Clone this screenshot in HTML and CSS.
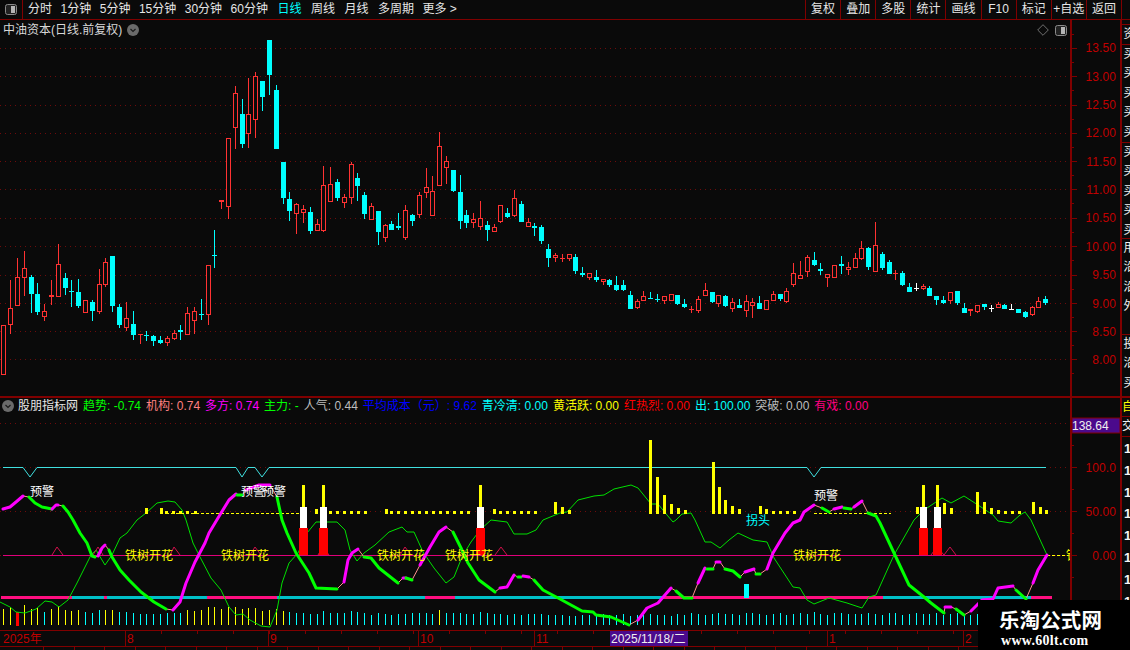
FILE: index.html
```html
<!DOCTYPE html>
<html lang="zh-CN">
<head>
<meta charset="utf-8">
<title>中油资本 日线</title>
<link rel="stylesheet" href="styles.css">
</head>
<body>
<div class="app">
  <header class="toolbar">
    <div class="tb-left">
      <svg class="icon-panel" viewBox="0 0 12 11"><rect x=".5" y=".5" width="11" height="10" rx="2" class="ip-frame"/><rect x="6" y="2" width="4" height="7" class="ip-fill"/></svg>
    </div>
    <nav class="tabs">
      <span class="num">分时</span><span class="num">1分钟</span><span class="num">5分钟</span><span class="num">15分钟</span><span class="num">30分钟</span><span>60分钟</span>
      <span class="active">日线</span><span>周线</span><span>月线</span><span class="num">多周期</span><span>更多 &gt;</span>
    </nav>
    <div class="actions">
      <span>复权</span><span>叠加</span><span>多股</span><span>统计</span><span>画线</span><span>F10</span><span>标记</span><span>+自选</span><span>返回</span>
    </div>
  </header>

  <section class="row row-main">
    <div class="plot">
      <div class="title-row">
        <span class="title">中油资本(日线.前复权)</span>
        <svg class="chev" viewBox="0 0 12 12"><circle cx="6" cy="6" r="6" class="chev-bg"/><path d="M3.5 5 6 7.5 8.5 5" class="chev-line"/></svg>
        <span class="grow"></span>
        <svg class="diamond" viewBox="0 0 12 12"><path d="M6 .7 11.3 6 6 11.3 .7 6Z"/></svg>
        <svg class="icon-panel" viewBox="0 0 12 11"><rect x=".5" y=".5" width="11" height="10" rx="2" class="ip-frame"/><rect x="6" y="2" width="4" height="7" class="ip-fill"/></svg>
      </div>
      <svg id="main" class="svg main-svg" viewBox="0 40 1070 356" width="1070" height="356"></svg>
    </div>
    <svg id="main-axis" class="axis" viewBox="1072 20 48 376" width="48" height="376">
      <text x="1116" y="52">13.50</text><text x="1116" y="80.5">13.00</text><text x="1116" y="109">12.50</text>
      <text x="1116" y="137">12.00</text><text x="1116" y="165.5">11.50</text><text x="1116" y="193.5">11.00</text>
      <text x="1116" y="222">10.50</text><text x="1116" y="250.5">10.00</text><text x="1116" y="279">9.50</text>
      <text x="1116" y="307.5">9.00</text><text x="1116" y="335.5">8.50</text><text x="1116" y="364">8.00</text>
    </svg>
    <aside class="side">
      <div class="side-gap"></div>
      <div class="tab t1"><span>资</span></div>
      <div class="tab t2"><span>买买买买买</span></div>
      <div class="tab t3"><span>买买买买买</span></div>
      <div class="tab t4"><span>用沿沿外</span></div>
      <div class="tab t5"><span>投沿买</span></div>
    </aside>
  </section>

  <section class="row row-sub">
    <div class="plot">
      <div class="legend">
        <svg class="chev" viewBox="0 0 12 12"><circle cx="6" cy="6" r="6" class="chev-bg"/><path d="M3.5 5 6 7.5 8.5 5" class="chev-line"/></svg>
        <span class="lg-name">股朋指标网</span>
        <span class="c-green">趋势: -0.74</span>
        <span class="c-salmon">机构: 0.74</span>
        <span class="c-magenta">多方: 0.74</span>
        <span class="c-green">主力: -</span>
        <span class="c-grey">人气: 0.44</span>
        <span class="c-blue">平均成本（元）: 9.62</span>
        <span class="c-cyan">青冷清: 0.00</span>
        <span class="c-yellow">黄活跃: 0.00</span>
        <span class="c-red">红热烈: 0.00</span>
        <span class="c-cyan">出: 100.00</span>
        <span class="c-grey">突破: 0.00</span>
        <span class="c-pink">有戏: 0.00</span>
      </div>
      <svg id="sub" class="svg" viewBox="0 414 1070 216" width="1070" height="216">
        <g id="sub-geo"></g>
        <text class="lb-y" x="125" y="559.5">铁树开花</text>
        <text class="lb-y" x="221" y="559.5">铁树开花</text>
        <text class="lb-y" x="377" y="559.5">铁树开花</text>
        <text class="lb-y" x="445" y="559.5">铁树开花</text>
        <text class="lb-y" x="793" y="559.5">铁树开花</text>
        <text class="lb-y" x="1066" y="559.5">铁</text>
        <text class="lb-w" x="30" y="496">预警</text>
        <text class="lb-w" x="241" y="496">预警</text>
        <text class="lb-w" x="262" y="496">预警</text>
        <text class="lb-w" x="814" y="499.5">预警</text>
        <text class="lb-c" x="746" y="524.5">拐头</text>
      </svg>
    </div>
    <svg id="sub-axis" class="axis" viewBox="1072 398 48 232" width="48" height="232">
      <rect class="hl-box" x="1072" y="418" width="48" height="15"/>
      <text class="hl-text" x="1072" y="430">138.64</text>
      <text x="1116" y="471.5">100.0</text><text x="1116" y="516">50.00</text><text x="1116" y="560">0.00</text>
    </svg>
    <aside class="side side-low">
      <div class="tab-y"><span>自</span></div>
      <div class="tab-j"><span>交</span></div>
      <ul class="digits"><li>1</li><li>1</li><li>1</li><li>1</li><li>1</li><li>1</li><li>1</li><li>1</li></ul>
    </aside>
  </section>

  <svg id="dates" class="dates" viewBox="0 630 1130 20" width="1130" height="20">
    <g id="date-geo"></g>
    <rect class="hl-date" x="610" y="631" width="78" height="15"/>
    <text class="dt" x="3" y="643">2025年</text>
    <text class="dt" x="127" y="643">8</text>
    <text class="dt" x="270" y="643">9</text>
    <text class="dt" x="420" y="643">10</text>
    <text class="dt" x="536" y="643">11</text>
    <text class="dt-hl" x="611" y="643">2025/11/18/二</text>
    <text class="dt" x="829" y="643">1</text>
    <text class="dt" x="965" y="643">2</text>
  </svg>

  <aside class="watermark">
    <div class="wm-cn">乐淘公式网</div>
    <div class="wm-en">www.60lt.com</div>
  </aside>
</div>
<script src="chart.js"></script>
</body>
</html>
```

FILE: styles.css
```css
* { box-sizing: border-box; }
html, body { margin: 0; padding: 0; background: #0a0a0a; }
body { font-family: "Liberation Sans", "Noto Sans CJK SC", sans-serif; font-size: 12px; color: #e6e6e6; }
.app { position: relative; width: 1130px; height: 650px; overflow: hidden; background: #0a0a0a; display: flex; flex-direction: column; }

.toolbar { display: flex; height: 20px; border-bottom: 1px solid #800000; flex: none; }
.tb-left { width: 23px; border-right: 1px solid #800000; display: flex; align-items: center; justify-content: center; }
.icon-panel { width: 12px; height: 11px; display: block; }
.ip-frame { fill: #222; stroke: #8a8a8a; stroke-width: 1; }
.ip-fill { fill: #b5b5b5; }
.tabs { display: flex; gap: 9.5px; padding-left: 5px; flex: 1; line-height: 19px; white-space: nowrap; }
.tabs .num { margin-right: -1px; }
.tabs .active { color: #00ffff; }
.actions { display: flex; width: 317px; margin-right: 8px; border-right: 1px solid #800000; line-height: 19px; }
.actions span { flex: 1; text-align: center; border-left: 1px solid #800000; white-space: nowrap; }

.row { display: flex; flex: none; }
.row-main { height: 378px; border-bottom: 2px solid #800000; }
.row-sub { height: 232px; }
.plot { width: 1070px; flex: none; display: flex; flex-direction: column; }
.svg { display: block; flex: none; }

.title-row { height: 20px; display: flex; align-items: center; padding: 0 3px; flex: none; line-height: 20px; }
.title { color: #d8d8d8; }
.chev { width: 12px; height: 12px; margin-left: 5px; flex: none; }
.chev-bg { fill: #6a6a6a; }
.chev-line { fill: none; stroke: #1a1a1a; stroke-width: 1.2; }
.grow { flex: 1; }
.diamond { width: 12px; height: 12px; margin-right: 6px; }
.diamond path { fill: none; stroke: #707070; stroke-width: 1; }

.axis { box-sizing: content-box; width: 48px; height: 100%; display: block; flex: none; border-left: 2px solid #800000; border-right: 2px solid #800000; }
.axis text { fill: #c00000; font-size: 12px; letter-spacing: .1px; text-anchor: end; }
.axis .hl-text { fill: #f0f0f0; text-anchor: start; font-size: 12px; letter-spacing: 0; }
.hl-box { fill: #4b0a8c; stroke: #800000; stroke-width: 1; }
.tick { stroke: #800000; stroke-width: 1; shape-rendering: crispEdges; }

.side { width: 8px; flex: none; overflow: hidden; display: flex; flex-direction: column; }
.side-gap { height: 5px; border-bottom: 1px solid #800000; flex: none; }
.tab { overflow: hidden; border-bottom: 1px solid #800000; flex: none; }
.tab span { display: block; width: 12px; writing-mode: vertical-rl; text-orientation: upright; letter-spacing: 7.5px; color: #f0f0f0; line-height: 12px; margin-top: 2px; white-space: nowrap; }
.t1 { height: 20px; }
.t2 { height: 98px; }
.t3 { height: 96px; }
.t4 { height: 96px; }
.t5 { flex: 1; border-bottom: 0; }

.side-low .tab-y { height: 19px; border-bottom: 1px solid #800000; color: #ffff00; flex: none; overflow: hidden; }
.side-low .tab-j { height: 20px; border-bottom: 1px solid #800000; color: #f0f0f0; flex: none; overflow: hidden; }
.tab-y span, .tab-j span { display: block; width: 12px; line-height: 18px; }
.digits { list-style: none; margin: 0; padding: 1px 0 0 2px; color: #f5f5f5; font-weight: bold; font-size: 13px; }
.digits li { height: 21.8px; line-height: 21.8px; }

.legend { height: 16px; display: flex; align-items: center; gap: 5px; padding-left: 2px; line-height: 16px; white-space: nowrap; flex: none; }
.legend .chev { margin-left: 0; margin-right: -1px; }
.lg-name { color: #e6e6e6; }
.c-green { color: #00ff00; }
.c-salmon { color: #ff8080; }
.c-magenta { color: #ff00ff; }
.c-grey { color: #bdbdbd; }
.c-blue { color: #0000ff; }
.c-cyan { color: #00ffff; }
.c-yellow { color: #ffff00; }
.c-red { color: #ff0000; }
.c-pink { color: #ff0080; }

.grid-line { stroke: #6e0b0b; stroke-width: 1; stroke-dasharray: 1 4; shape-rendering: crispEdges; }
.rb { fill: #ff3232; shape-rendering: crispEdges; }
.cb { fill: #00ffff; shape-rendering: crispEdges; }
.wb { fill: #ffffff; shape-rendering: crispEdges; }
.rh { fill: #0a0a0a; stroke: #ff3232; stroke-width: 1; shape-rendering: crispEdges; }
.yb { fill: #ffff00; shape-rendering: crispEdges; }
.redb { fill: #ff0000; shape-rendering: crispEdges; }
.pinkb { fill: #ff0f80; shape-rendering: crispEdges; }
.tealb { fill: #00c0c8; shape-rendering: crispEdges; }

.l-top { fill: none; stroke: #40e0e0; stroke-width: 1; }
.l-zero { stroke: #e0007a; stroke-width: 1; shape-rendering: crispEdges; }
.l-ydash { stroke: #ffff00; stroke-width: 1; stroke-dasharray: 3 2; shape-rendering: crispEdges; }
.l-thin { fill: none; stroke: #00e000; stroke-width: 1; }
.l-tri { fill: none; stroke: #d0104a; stroke-width: 1; }
.l-m { fill: none; stroke: #ff00ff; stroke-width: 3; stroke-linecap: round; stroke-linejoin: round; }
.l-g { fill: none; stroke: #00ff00; stroke-width: 3; stroke-linecap: round; stroke-linejoin: round; }
.l-conn { fill: none; stroke: #ff9090; stroke-width: 1; }
.lb-y { fill: #ffff00; font-size: 12px; }
.lb-w { fill: #ffffff; font-size: 12px; }
.lb-c { fill: #00ffff; font-size: 12px; }

.dates { display: block; flex: none; }
.hl-date { fill: #4b0a8c; }
.dt { fill: #c00000; font-size: 12px; }
.dt-hl { fill: #f0f0f0; font-size: 12px; }
.date-line { stroke: #800000; stroke-width: 1; shape-rendering: crispEdges; }

.watermark { position: absolute; left: 978px; top: 600px; width: 152px; height: 50px; background: #000; color: #fff; overflow: hidden; padding-left: 21px; }
.wm-cn { font-family: "Noto Sans CJK SC", sans-serif; font-weight: bold; font-size: 20.5px; line-height: 26px; margin-top: 6px; letter-spacing: .1px; white-space: nowrap; }
.wm-en { font-family: "Liberation Serif", serif; font-weight: bold; font-size: 14px; line-height: 16px; margin-top: 1px; padding-left: 2px; letter-spacing: .3px; white-space: nowrap; }
```

FILE: chart.js
```js
(function () {
  var parts = [];
  function rect(c, x, y, w, h) { parts.push('<rect class="' + c + '" x="' + x + '" y="' + y + '" width="' + w + '" height="' + h + '"/>'); }
  function line(c, x1, y1, x2, y2) { parts.push('<line class="' + c + '" x1="' + x1 + '" y1="' + y1 + '" x2="' + x2 + '" y2="' + y2 + '"/>'); }
  function poly(c, pts) { parts.push('<polyline class="' + c + '" points="' + pts + '"/>'); }
  function flush(id) { var el = document.getElementById(id); el.insertAdjacentHTML('afterbegin', parts.join('')); parts = []; }
  function xAt(i) { return Math.round(3.3 + 6.81 * i); }

  /* candles: type, high, top, bottom, low — in sections with own origin (y = base + v / 3) */
  var A = ['r,885,885,1035,1035','r,750,835,886,911','r,685,742,827,827','r,663,715,743,797','c,735,741,792,848','c,760,792,846,855','r,822,844,860,873','r,750,796,800,825','r,642,703,800,800','c,729,744,774,795','c,750,784,786,830','c,747,786,828,834','r,811,811,848,848','c,810,816,843,873','r,717,763,846,851','r,684,697,764,771','c,678,678,828,846','c,822,831,885,894','r,816,865,893,903','c,843,882,915,930','r,912,912,916,942','c,903,915,917,933','c,915,918,933,948','c,918,930,939,942','r,918,925,938,948','r,900,910,926,930','c,885,901,905,930','r,831,850,914,914','r,831,844,872,912','c,807,852,855,870','r,706,706,854,885','c,600,675,678,714','r,510,510,515,537','r,325,325,530,567','r,168,190,293,357','c,207,252,342,354','r,144,253,311,354','r,126,139,269,324','c,153,153,201,243','c,30,30,135,195','c,165,180,357,357','c,396,396,504,522','c,486,507,543,573','r,519,522,551,612','r,525,538,548,579','c,531,546,603,612','r,567,583,602,602','r,408,466,602,606'];
  var B = ['r,141,193,245,245','c,178,186,234,243','r,222,232,248,264','r,126,132,233,252','c,159,174,198,243','c,216,225,282,297','r,249,259,299,299','c,273,273,336,375','r,312,316,354,366','c,303,312,330,330','c,279,318,323,330','r,255,271,353,360','c,282,285,303,318','r,216,226,284,294','r,144,202,218,234','r,168,214,287,287','r,36,79,197,197','r,108,124,143,192','c,150,150,213,216','c,165,216,303,327','c,270,285,309,324','r,279,298,308,324','r,243,295,320,330','c,303,315,330,363','r,312,322,335,335','r,256,256,305,309','c,264,279,291,294','r,210,235,288,291','c,243,252,306,306','r,294,307,320,320','c,309,318,323,348','c,315,321,363,372','c,372,387,414,441','r,399,405,413,426','r,402,414,418,426','r,403,403,416,423','c,402,411,453,462','c,441,459,464,471','r,459,460,473,480','c,450,471,480,486','r,478,478,485,495','c,477,480,495,501','c,468,495,510,513','c,480,495,510,513','c,513,525,567,567','r,537,544,563,567','r,513,529,542,542','c,516,534,537,537','c,522,537,540,546','r,529,529,542,552','r,523,523,542,542','c,525,525,552,555','c,537,552,561,564','r,558,567,571,579','r,528,538,572,579'];
  var C = ['r,219,241,258,258','c,246,246,276,279','r,256,256,281,291','c,255,259,288,291','r,264,277,297,306','c,267,285,294,294','r,255,274,303,321','r,264,277,287,324','c,258,279,297,297','r,271,271,299,299','r,243,253,272,272','c,252,252,267,273','r,235,244,276,279','r,159,190,224,231','r,153,196,206,206','r,135,142,185,201','c,126,150,165,168','c,159,177,182,195','r,193,193,203,231','r,166,166,203,203','c,138,162,167,192','r,156,172,179,195','r,129,145,173,173','r,93,115,147,150','c,111,114,171,180','r,36,106,185,185','c,126,132,174,180','c,150,156,192,192','r,180,189,192,210','c,183,189,225,228','c,219,231,246,246','w,219,235,238,243','r,222,228,236,240','c,228,234,258,258','c,258,258,270,285','c,258,270,279,282','r,247,247,272,282','c,243,243,279,285','c,279,294,309,309','r,297,297,302,318','r,286,286,305,308','c,282,282,291,300','w,285,295,298,306','r,276,283,293,293','c,282,285,297,297','w,282,297,300,300','c,297,297,309,309','c,303,306,321,324','r,288,292,315,318','r,261,274,294,294','c,258,267,279,285'];

  var levels = [48, 76, 105, 133, 161, 189.5, 218, 246, 275, 303, 331, 359.5];
  levels.forEach(function (y) { var py = Math.floor(y) + 0.5; line('grid-line', 0, py, 1068, py); });

  var idx = 0;
  [[A, 30], [B, 120], [C, 210]].forEach(function (sec) {
    sec[0].forEach(function (s) {
      var f = s.split(','), k = f[0];
      var h = Math.round(sec[1] + f[1] / 3), t = Math.round(sec[1] + f[2] / 3);
      var b = Math.round(sec[1] + f[3] / 3), l = Math.round(sec[1] + f[4] / 3);
      var x = xAt(idx), fill = k === 'r' ? 'rb' : k === 'c' ? 'cb' : 'wb';
      if (h < t) rect(fill, x, h, 1, t - h);
      if (l > b) rect(fill, x, b, 1, l - b);
      if (f[3] - f[2] <= 5) {
        rect(fill, x - 2, t, 5, Math.max(1, b - t));
      } else if (k === 'r') {
        rect('rh', x - 1.5, t + 0.5, 4, Math.max(1, b - t - 1));
      } else {
        rect(fill, x - 2, t, 5, b - t);
      }
      idx++;
    });
  });
  flush('main');

  /* main axis ticks */
  levels.forEach(function (y) {
    var py = Math.floor(y) + 0.5;
    line('tick', 1072, py, 1077, py);
    line('tick', 1072, py + 14, 1074, py + 14);
  });
  line('tick', 1072, 34.5, 1074, 34.5);
  flush('main-axis');

  /* sub panel */
  [423, 467, 511, 555].forEach(function (y) { line('grid-line', 0, y + 0.5, 1070, y + 0.5); });
  poly('l-top', '3,467.5 23,467.5 30,477 37,467.5 236,467.5 242,477 248,467.5 255,467.5 262,477 269,467.5 807,467.5 814,477 821,467.5 1046,467.5');
  line('l-zero', 3, 555.5, 1046, 555.5);
  line('l-ydash', 1047, 555.5, 1068, 555.5);
  [[1, 72, 'pinkb'], [72, 104, 'tealb'], [104, 107, 'pinkb'], [107, 207, 'tealb'], [207, 277, 'pinkb'], [277, 425, 'tealb'], [425, 455, 'pinkb'], [455, 662, 'tealb'], [662, 883, 'pinkb'], [883, 1031, 'tealb'], [1031, 1052, 'pinkb']].forEach(function (s) { rect(s[2], s[0], 596, s[1] - s[0], 3); });
  rect('cb', 744, 584, 5, 14);

  /* volume-like ticks */
  var tops = [267,262,277,255,268,265,277,267,258,270,272,270,275,279,270,270,270,277,277,280,282,283,282,283,280,280,279,270,272,270,262,260,268,260,262,266,265,265,272,270,267,272,277,280,279,283,283,273,279,280,278,273,276,278,286,280,281,285,282,281,280,279,278,282,270,278,280,279,283,283,277,280,283,281,284,281,284,281,281,282,284,285,285,287,288,285,286,287,282,286,285,283,287,285,286,282,284,286,287,283,285,280,283,284,283,280,281,283,285,280,279,282,284,281,279,284,282,280,283,277,282,284,280,279,282,283,281,279,283,285,280,278,284,282,280,283,281,279,284,282,280,283,285,281,279,282];
  var yellow = { 0: 1, 1: 1, 3: 1, 4: 1, 5: 1, 7: 1, 8: 1, 9: 1, 10: 1, 11: 1, 15: 1, 16: 1, 64: 1 };
  for (var y = 27; y <= 41; y++) yellow[y] = 1;
  tops.forEach(function (t, i) {
    var x = xAt(i), topY = Math.round(520 + t / 3);
    if (i === 2) { rect('redb', x - 1, 612, 3, 14); return; }
    rect(yellow[i] ? 'yb' : 'cb', x, topY, 1, 625 - topY);
  });

  /* thin line */
  poly('l-thin', '0,602 10,607 16,612 25,613 36,609 45,601 52,602 59,607 68,600 77,583 91,555 96,550 105,565 112,555 120,538 127,533 137,520 146,513 157,503 168,501 175,502 182,510 186,520 193,543 200,557 211,578 221,590 229,607 236,615 243,614 250,620 261,626 270,627 277,610 282,583 289,563 298,553 307,533 316,522 337,522 345,530 350,550 357,561 364,553 375,545 389,532 402,527 407,532 414,532 423,552 434,568 446,583 454,577 462,557 471,542 480,530 491,520 507,522 514,534 527,534 536,530 543,520 560,513 567,512 578,500 594,496 604,495 614,489 631,485 638,488 651,504 658,504 667,515 673,522 676,520 682,514 691,513 695,520 705,542 711,542 720,548 729,540 738,533 753,540 767,542 774,558 793,587 800,588 807,600 814,604 829,598 847,603 862,608 869,597 876,595 894,555 914,520 924,510 942,498 951,503 964,496 978,505 993,515 998,521 1011,523 1020,515 1025,512 1031,520 1047,555');

  /* triangles */
  [[52, 57, 63], [93, 98, 103], [170, 174, 180], [250, 255, 261], [318, 323, 329], [400, 405, 411], [495, 501, 507], [931, 937, 944], [944, 950, 956]].forEach(function (t) {
    poly('l-tri', t[0] + ',555 ' + t[1] + ',547 ' + t[2] + ',555');
  });

  /* yellow bars on the 50 level */
  var base = 514;
  [[146,508],[161,508],[316,509],[386,509],[494,509],[555,502],[562,507],[569,510],[650,440],[657,477],[664,495],[671,504],[678,508],[685,510],[713,462],[719,487],[725,500],[732,506],[739,509],[760,506],[766,509],[773,511],[917,507],[944,503],[951,508],[977,492],[984,502],[991,508],[998,510],[1033,502],[1040,507],[1046,510]].forEach(function (b) { rect('yb', b[0] - 1, b[1], 3, base - b[1]); });
  [166,173,180,187,195,323,330,337,344,351,358,365,391,398,405,412,419,426,433,440,447,454,461,468,500,507,514,521,528,535,780,787,794,1005,1012,1019].forEach(function (x) { rect('yb', x - 1, 511, 3, 3); });
  line('l-ydash', 166, 513.5, 300, 513.5);
  line('l-ydash', 814, 513.5, 891, 513.5);

  /* signal columns */
  [[299, 300, 302], [319, 320, 322], [476, 477, 479], [919, 920, 922], [933, 934, 936]].forEach(function (c) {
    rect('yb', c[2], 485, 3, 22);
    rect('wb', c[1], 507, 7, 21);
    rect('redb', c[0], 528, 9, 27);
  });

  /* thick trend */
  var seg = [
    'm 3,509 10,507 16,502 23,496','g 29,497 35,503 42,507 52,509','m 52,509 56,505 58,505',
    'g 63,506 68,512 73,520 80,533 87,543 92,556 95,557','m 98,556 102,548 105,545',
    'g 109,550 112,557 120,570 129,580 141,592 154,602 166,609',
    'm 173,610 180,602 186,583 195,562 205,543 209,533 218,518 229,500 236,494','g 237,495 242,495','m 246,490 259,485 270,485',
    'g 277,497 282,520 287,533 296,553 309,573 316,588 337,589','m 344,582 348,560 352,553 358,549',
    'g 364,557 371,558 379,568 398,583','m 403,578 406,578','g 406,578 412,580','m 420,565 430,547 439,532 446,527',
    'g 453,532 461,548 468,563 479,580 495,592','m 500,588 507,587 514,575','g 518,577 521,577','m 523,576 529,577',
    'g 534,580 543,590 560,599 571,605 582,611 593,612 596,615 611,617 629,625','m 638,620 647,608 658,603 671,588',
    'g 676,591 684,598 692,598','m 698,583 705,568','g 707,569 713,569','m 716,562 720,562','g 725,569 733,571 740,577',
    'm 745,572 754,569','g 756,574 760,574','m 767,569 773,553 785,533 793,523 800,520 804,512 814,505','g 822,508 829,512',
    'm 834,509 842,507','g 844,508 851,509','m 854,507 862,501','g 868,513 876,516 880,523 894,553 909,585 924,597 931,603 944,613',
    'm 945,607 951,607','g 956,609 964,615','m 971,611 982,600 993,599 998,588 1013,586','g 1016,590 1026,599','m 1033,583 1038,570 1047,555'
  ];
  var last = null;
  seg.forEach(function (s) {
    var sp = s.indexOf(' '), pts = s.slice(sp + 1), arr = pts.split(' ');
    if (last && last !== arr[0]) poly('l-conn', last + ' ' + arr[0]);
    last = arr[arr.length - 1];
  });
  seg.forEach(function (s) {
    var sp = s.indexOf(' ');
    poly(s[0] === 'm' ? 'l-m' : 'l-g', s.slice(sp + 1));
  });
  flush('sub-geo');

  /* sub axis ticks */
  [467, 511, 555].forEach(function (y) { line('tick', 1072, y + 0.5, 1077, y + 0.5); line('tick', 1072, y - 21.5, 1074, y - 21.5); });
  line('tick', 1072, 577.5, 1074, 577.5);
  flush('sub-axis');

  /* date strip */
  line('date-line', 0, 630.5, 1130, 630.5);
  line('date-line', 0, 646.5, 1130, 646.5);
  [125, 268, 418, 534, 827, 963].forEach(function (x) { line('date-line', x + 0.5, 631, x + 0.5, 646); });
  for (var m = 161; m < 978; m += 36) line('date-line', m + 0.5, 631, m + 0.5, 634);
  for (var n = 43; n < 978; n += 30.5) { var q = Math.round(n) + 0.5; line('date-line', q, 647, q, 650); }
  flush('date-geo');
})();
```
